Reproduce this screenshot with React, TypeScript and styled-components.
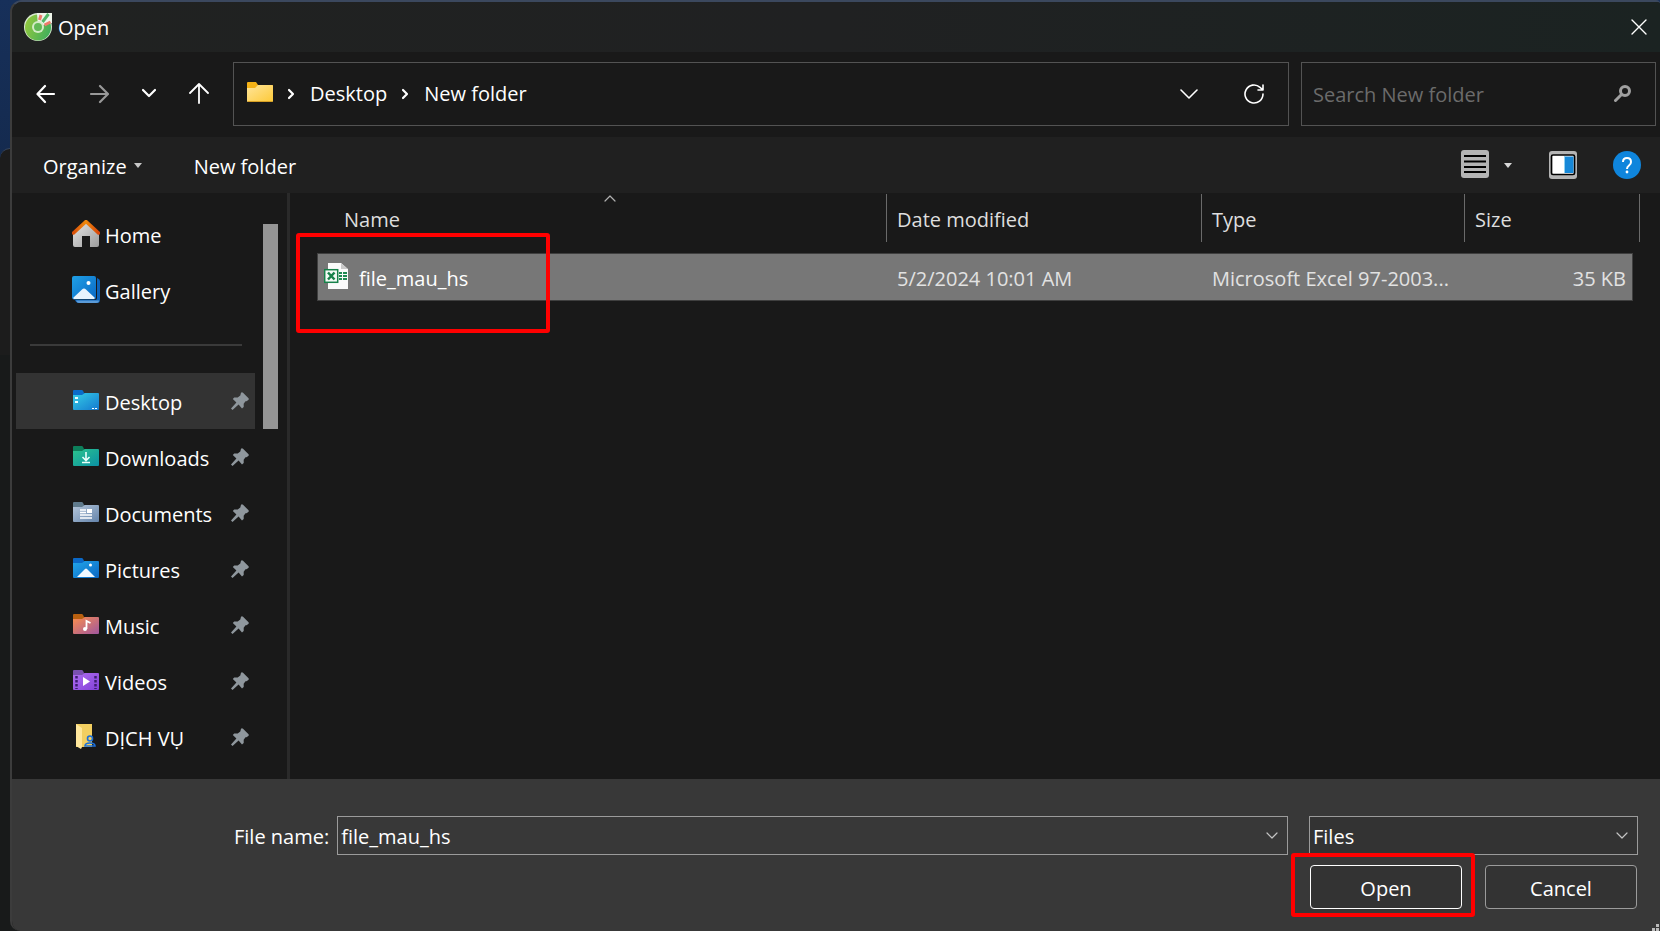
import React from "react";
import styled, { createGlobalStyle, css } from "styled-components";

const GlobalStyle = createGlobalStyle`
  *, *::before, *::after { box-sizing: border-box; }
  body {
    margin: 0;
    background: #1a1c1c;
    color: #fff;
    font-family: "Open Sans", "Noto Sans", sans-serif;
    font-size: 20px;
    line-height: 28px;
  }
  button, input, select { font: inherit; color: inherit; }
  svg { display: block; flex: none; }
`;

const Backdrop = styled.div`
  min-height: 100vh;
  display: grid;
  grid-template-columns: 10px minmax(0, 1fr);
  background: linear-gradient(180deg, #17305a 0, #142a4e 170px, #1a1c1c 170px);
`;

const BehindWindow = styled.div`
  margin-top: 148px;
  border-top: 1px solid #38465c;
  border-top-left-radius: 10px;
  background: linear-gradient(180deg, #1c1c1c 0, #1c1c1c 206px, #181a1a 206px);
`;

const Dialog = styled.main`
  display: flex;
  flex-direction: column;
  min-height: 100vh;
  overflow: hidden;
  border-left: 2px solid #3c3c3c;
  border-top: 2px solid #3b485e;
  border-radius: 12px 4px 0 10px;
  background: #191919;
`;

const TitleBar = styled.header`
  display: flex;
  align-items: center;
  gap: 6px;
  height: 50px;
  padding: 0 13px 0 12px;
  background: linear-gradient(90deg, #202221 0, #202122 50%, #1b2322 100%);
`;

const Title = styled.h1`
  flex: 1;
  margin: 0;
  padding-top: 2px;
  font-size: 20px;
  font-weight: 400;
`;

const IconButton = styled.button`
  display: flex;
  align-items: center;
  justify-content: center;
  padding: 0;
  border: 0;
  background: transparent;
`;

const NavBar = styled.nav`
  display: flex;
  align-items: center;
  gap: 12px;
  height: 85px;
  padding: 0 4px 2px 24px;
`;

const NavButtons = styled.div`
  display: flex;
  gap: 33px;
  margin-right: 12px;
`;

const NavField = css`
  display: flex;
  align-items: center;
  height: 64px;
  border: 1px solid #535353;
`;

const AddressBar = styled.div`
  ${NavField}
  flex: 1;
  min-width: 0;
  padding: 0 24px 0 13px;
`;

const Crumbs = styled.ol`
  display: flex;
  flex: 1;
  align-items: center;
  gap: 14px;
  margin: 0 0 0 14px;
  padding: 0;
  list-style: none;
`;

const Crumb = styled.li`
  display: flex;
  align-items: center;
  gap: 15px;

  a { color: inherit; text-decoration: none; }
`;

const AddressActions = styled.div`
  display: flex;
  gap: 46px;
`;

const SearchBox = styled.label`
  ${NavField}
  width: 355px;
  padding: 0 24px 0 11px;
`;

const SearchInput = styled.input`
  flex: 1;
  min-width: 0;
  padding: 2px 0 0;
  border: 0;
  outline: 0;
  background: transparent;

  &::placeholder { color: #6b6b6b; opacity: 1; }
`;

const CommandBar = styled.div`
  display: flex;
  align-items: center;
  height: 56px;
  padding: 0 19px 0 31px;
  background: #202020;
`;

const CommandGroup = styled.div<{ $push?: boolean; $gap: number }>`
  display: flex;
  align-items: center;
  gap: ${(p) => p.$gap}px;
  margin-left: ${(p) => (p.$push ? "auto" : 0)};
`;

const CommandButton = styled(IconButton)`
  gap: 7px;
`;

const CommandLabel = styled.span`
  padding-top: 3px;
`;

const Body = styled.div`
  display: flex;
  flex: 1;
`;

const Sidebar = styled.aside`
  display: flex;
  flex: none;
  width: 278px;
  padding: 13px 0 14px 4px;
  border-right: 3px solid #2a2a2a;
`;

const PlaceList = styled.ul`
  width: 239px;
  margin: 0;
  padding: 0;
  list-style: none;
`;

const PlaceLink = styled.a<{ $selected?: boolean }>`
  display: flex;
  align-items: center;
  gap: 5px;
  height: 56px;
  padding: 0 6px 0 56px;
  background: ${(p) => (p.$selected ? "#333" : "transparent")};
  color: #fff;
  text-decoration: none;
  white-space: nowrap;
`;

const PlaceName = styled.span`
  flex: 1;
  padding-top: 3px;
`;

const PlaceDivider = styled.li`
  height: 2px;
  margin: 26px 13px 27px 14px;
  background: #3a3a3a;
`;

const ScrollThumb = styled.div`
  width: 15px;
  height: 205px;
  margin: 18px 0 0 8px;
  background: #959595;
`;

const FilePane = styled.section`
  flex: 1;
  min-width: 0;
  padding: 1px 20px 0 27px;
`;

const FileTable = styled.table`
  display: block;
  font-weight: 400;

  thead, tbody { display: block; }
`;

const HeaderRow = styled.tr`
  display: grid;
  grid-template-columns: minmax(0, 1fr) 315px 263px 175px;
  margin-bottom: 11px;
  padding-left: 17px;
`;

const HeaderCell = styled.th`
  position: relative;
  height: 48px;
  padding: 12px 10px 0;
  border-right: 1px solid #6a6a6a;
  color: #dedede;
  font-weight: 400;
  text-align: left;
`;

const SortMark = styled.span`
  position: absolute;
  top: 0;
  left: 50%;
  transform: translateX(-50%);
`;

const FileRow = styled.tr`
  display: grid;
  grid-template-columns: minmax(0, 1fr) 315px 263px 167px;
  align-items: center;
  height: 48px;
  margin-right: 7px;
  border: 1px solid #3f3f3f;
  background: #777;
`;

const FileCell = styled.td<{ $end?: boolean }>`
  padding: 3px ${(p) => (p.$end ? 6 : 14)}px 0 10px;
  overflow: hidden;
  color: #e2e2e2;
  text-align: ${(p) => (p.$end ? "right" : "left")};
  text-overflow: ellipsis;
  white-space: nowrap;
`;

const NameCell = styled.td`
  position: relative;
  display: flex;
  align-items: center;
  gap: 11px;
  padding: 0 0 0 6px;
`;

const FileName = styled.span`
  padding-top: 4px;
`;

const Highlight = styled.span`
  position: absolute;
  border: 4px solid #f00;
  border-radius: 3px;
  pointer-events: none;
`;

const FileHighlight = styled(Highlight)`
  top: -28px;
  left: -22px;
  width: 254px;
  height: 100px;
`;

const ButtonHighlight = styled(Highlight)`
  inset: -12px -13px -8px -19px;
`;

const Footer = styled.form`
  position: relative;
  display: grid;
  grid-template-columns: minmax(0, 1fr) 329px;
  column-gap: 21px;
  row-gap: 10px;
  padding: 37px 22px 22px 222px;
  background: #383838;
`;

const FileNameField = styled.label`
  display: flex;
  align-items: center;
  gap: 8px;
  height: 39px;
  white-space: nowrap;
`;

const FieldLabel = styled.span`
  padding-top: 2px;
`;

const BoxFrame = styled.span`
  position: relative;
  display: flex;
  flex: 1;
  min-width: 0;
  height: 39px;
`;

const fieldStyle = css`
  width: 100%;
  padding: 3px 40px 0 3px;
  border: 1px solid #9b9b9b;
  border-radius: 0;
  outline: 0;
`;

const FileNameInput = styled.input`
  ${fieldStyle}
  background: #383838;
`;

const TypeSelect = styled.select`
  ${fieldStyle}
  appearance: none;
  background: #333;
`;

const FieldChevron = styled.span`
  position: absolute;
  top: 15px;
  right: 10px;
  pointer-events: none;
`;

const Buttons = styled.div`
  display: flex;
  grid-column: 2;
  justify-content: space-between;
  padding: 0 1px;
`;

const ButtonSlot = styled.span`
  position: relative;
  display: flex;
`;

const DialogButton = styled.button<{ $primary?: boolean }>`
  width: 152px;
  height: 44px;
  padding: 3px 0 0;
  border: 1px solid ${(p) => (p.$primary ? "#fff" : "#9b9b9b")};
  border-radius: 4px;
  background: #333;
`;

const Grip = styled.span`
  position: absolute;
  right: 0;
  bottom: 0;
`;

type StrokeProps = { d: string; w: number; h: number; color?: string; width?: number };

const Stroke = ({ d, w, h, color = "#fff", width = 2 }: StrokeProps) => (
  <svg width={w} height={h} viewBox={`0 0 ${w} ${h}`} fill="none" stroke={color} strokeWidth={width} strokeLinecap="round" strokeLinejoin="round" aria-hidden="true">
    <path d={d} />
  </svg>
);

const Caret = () => (
  <svg width="8" height="5" viewBox="0 0 8 5" aria-hidden="true"><path d="M0 0h8L4 5z" fill="#c8c8c8" /></svg>
);

const AppLogo = () => (
  <svg width="28" height="28" viewBox="0 0 28 28" aria-hidden="true">
    <defs>
      <linearGradient id="logo" x1="0" x2="1" y1="0.3" y2="0.7">
        <stop offset="0" stopColor="#93c83e" /><stop offset="1" stopColor="#3fae5c" />
      </linearGradient>
    </defs>
    <circle cx="14" cy="14" r="14" fill="#d9ead0" />
    <path d="M14 0h14v10H14z" fill="#f1f6ee" />
    <circle cx="14" cy="14.500" r="13" fill="url(#logo)" />
    <path d="M14 14L13 0h15v9z" fill="#eef5ea" />
    <path d="M15.500 7l1.500-5" stroke="#ee7b6b" strokeWidth="3" />
    <path d="M18.500 9l6-8" stroke="#52b766" strokeWidth="3" />
    <path d="M20.500 12l6-3" stroke="#ee7b6b" strokeWidth="3" />
    <circle cx="14" cy="14" r="6" fill="#d3ebc6" />
    <circle cx="14" cy="14" r="4" fill="#62b957" />
  </svg>
);

const YellowFolder = () => (
  <svg width="26" height="26" viewBox="0 0 26 26" aria-hidden="true">
    <defs>
      <linearGradient id="yf" x1="0" x2="1" y1="0" y2="1">
        <stop offset="0" stopColor="#ffe59b" /><stop offset="1" stopColor="#fdc937" />
      </linearGradient>
    </defs>
    <path d="M0 2q0-1 1-1h8l2 3h14q1 0 1 1v4H0z" fill="#f5b216" />
    <path d="M0 7h8l3-3h14q1 0 1 1v15q0 1-1 1H1q-1 0-1-1z" fill="url(#yf)" />
    <path d="M1 20.500h24" stroke="#d9a125" />
  </svg>
);

const HomeIcon = () => (
  <svg width="28" height="28" viewBox="0 0 28 28" aria-hidden="true">
    <defs>
      <linearGradient id="wall" x1="0" x2="1" y1="0" y2="1"><stop offset="0" stopColor="#e6e6e6" /><stop offset="1" stopColor="#9c9c9c" /></linearGradient>
      <linearGradient id="roof" x1="0" x2="1"><stop offset="0" stopColor="#d9500a" /><stop offset="0.5" stopColor="#f08a0c" /><stop offset="1" stopColor="#d8460a" /></linearGradient>
    </defs>
    <path d="M1 13L14 2l13 11v12q0 2-2 2h-7V16h-8v11H3q-2 0-2-2z" fill="url(#wall)" />
    <path d="M1.500 13L14 1.500l12.500 11.500" fill="none" stroke="url(#roof)" strokeWidth="3.500" strokeLinecap="round" strokeLinejoin="round" />
  </svg>
);

const GalleryIcon = () => (
  <svg width="28" height="28" viewBox="0 0 28 28" aria-hidden="true">
    <defs>
      <linearGradient id="gal" x1="0" x2="1" y1="0" y2="1"><stop offset="0" stopColor="#1fa0e6" /><stop offset="1" stopColor="#0a68c4" /></linearGradient>
    </defs>
    <path d="M25 2q3 1 3 3v19q0 3-3 3H7q-3 0-4-3h20q2 0 2-2z" fill="#0c62b8" />
    <path d="M4 24.500h23q0 2.500-3 2.500H7q-2 0-3-2.500z" fill="#5b9bd8" />
    <rect width="24" height="23.500" rx="2" fill="url(#gal)" />
    <path d="M1 22l9-8.500q2-2 4 0l9 8.500-1 1H2z" fill="#e8f4fd" />
    <circle cx="16.500" cy="7" r="2" fill="#fff" />
  </svg>
);

type FolderProps = { id: string; tab: string; from: string; to: string; children?: React.ReactNode };

const PlaceFolder = ({ id, tab, from, to, children }: FolderProps) => (
  <svg width="28" height="22" viewBox="-1 0 28 22" aria-hidden="true">
    <defs>
      <linearGradient id={id} x1="0" x2="1" y1="0" y2="1"><stop offset="0" stopColor={from} /><stop offset="1" stopColor={to} /></linearGradient>
    </defs>
    <path d="M0 1q0-1 1-1h8q1 0 2 3h14v3H0z" fill={tab} />
    <path d="M0 5h9l3-2h13q1 0 1 1v15q0 1-1 1H1q-1 0-1-1z" fill={`url(#${id})`} />
    {children}
  </svg>
);

const ServiceFolder = () => (
  <svg width="28" height="28" viewBox="0 0 28 28" aria-hidden="true">
    <path d="M4 1h16v23H4z" fill="#f3cf60" />
    <path d="M4 1l6 4v19l-1 2-5-3z" fill="#ffe79c" />
    <g fill="none" stroke="#1b6fd8" strokeWidth="1.600">
      <circle cx="18" cy="15.500" r="2.500" />
      <path d="M13 23q0-3 5-3t5 3z" />
    </g>
  </svg>
);

const PinIcon = () => (
  <svg width="18" height="18" viewBox="0 0 18 18" fill="#8f979d" aria-hidden="true">
    <path d="M10 0.700q1-1 2 0l5.300 5.300q1 1 0 2l-1.800 1.200-1 0-1.800 2.600v3.200l-1.700 1.500L7.600 12.600 1.500 18 0 16.500l5.400-6.100L1.800 7l1.400-1.600h3.500l2.600-2z" />
  </svg>
);

const ExcelIcon = () => (
  <svg width="24" height="28" viewBox="0 0 24 28" aria-hidden="true">
    <path d="M4 0h14l6 6v20H4z" fill="#fafafa" />
    <path d="M17 0h7v6z" fill="#777" />
    <path d="M17 0v6h7z" fill="#c9c9c9" />
    <path d="M15 10h3M19 10h4M15 13h3M19 13h4M15 16h3M19 16h4" stroke="#1f8a52" strokeWidth="2" />
    <rect x="0.700" y="6.700" width="13" height="12.600" fill="#f4faf6" stroke="#17814a" strokeWidth="1.500" />
    <path d="M4 9.500l6.500 7M10.500 9.500l-6.500 7" stroke="#17814a" strokeWidth="2.500" />
  </svg>
);

const places = [
  { name: "Home", icon: <HomeIcon /> },
  { name: "Gallery", icon: <GalleryIcon /> },
];

const pinned = [
  {
    name: "Desktop", selected: true,
    icon: (
      <PlaceFolder id="desk" tab="#0a6cc9" from="#35cde6" to="#1479cf">
        <path d="M2 7h3v2H2zM2 11h3v2H2z" fill="#eaffff" /><path d="M19 18.500h2M22 18.500h2" stroke="#fff" />
      </PlaceFolder>
    ),
  },
  {
    name: "Downloads",
    icon: (
      <PlaceFolder id="down" tab="#0d7f5b" from="#2cc48c" to="#0b91a5">
        <path d="M13 6v8M9.500 11l3.500 3.500 3.500-3.500M9 16.500h8" fill="none" stroke="#e9fffa" strokeWidth="1.600" />
      </PlaceFolder>
    ),
  },
  {
    name: "Documents",
    icon: (
      <PlaceFolder id="docs" tab="#5f7a8c" from="#b5c6da" to="#6484ab">
        <path d="M7 8h6M7 10.500h6M7 13h12M7 16h12" stroke="#fff" strokeWidth="1.500" /><path d="M14 7h5v4h-5z" fill="#fff" />
      </PlaceFolder>
    ),
  },
  {
    name: "Pictures",
    icon: (
      <PlaceFolder id="pics" tab="#0b68c6" from="#22a7ea" to="#0b66c2">
        <path d="M4 19l8-8q1-1 2 0l8 8z" fill="#f2f9ff" /><circle cx="17.500" cy="7" r="1.500" fill="#fff" />
      </PlaceFolder>
    ),
  },
  {
    name: "Music",
    icon: (
      <PlaceFolder id="music" tab="#b9600f" from="#fb8e4c" to="#a0569f">
        <circle cx="12" cy="15" r="2" fill="#fff" /><path d="M13.500 15V7l4 2" fill="none" stroke="#fff" strokeWidth="1.800" />
      </PlaceFolder>
    ),
  },
  {
    name: "Videos",
    icon: (
      <PlaceFolder id="vids" tab="#7a50b0" from="#b06ef0" to="#8240d8">
        <path d="M10 7l7 4.500-7 4.500z" fill="#fff" />
        <path d="M3.500 6v13M22.500 6v13" stroke="#3c1c70" strokeWidth="2.500" strokeDasharray="2.500 1.500" />
      </PlaceFolder>
    ),
  },
  { name: "DỊCH VỤ", icon: <ServiceFolder /> },
];

const DownChevron = () => <Stroke d="M1 2l5 5 5-5" w={12} h={8} color="#c4c4c4" width={1.2} />;

export default function App() {
  return (
    <>
      <GlobalStyle />
      <Backdrop>
        <BehindWindow />
        <Dialog>
          <TitleBar>
            <AppLogo />
            <Title>Open</Title>
            <IconButton aria-label="Close"><Stroke d="M1 1l14 14M15 1L1 15" w={16} h={16} width={1.4} /></IconButton>
          </TitleBar>

          <NavBar>
            <NavButtons>
              <IconButton aria-label="Back"><Stroke d="M18 10H2M9 2L1.500 10l7.500 8" w={20} h={20} width={2.2} /></IconButton>
              <IconButton aria-label="Forward"><Stroke d="M2 10h16M11 2l8 8-8 8" w={20} h={20} color="#999" width={2.2} /></IconButton>
              <IconButton aria-label="Recent locations"><Stroke d="M1 6l6 6 6-6" w={14} h={20} width={2.2} /></IconButton>
              <IconButton aria-label="Up"><Stroke d="M10 20V1M1 10l9-9 9 9" w={20} h={21} width={1.8} /></IconButton>
            </NavButtons>
            <AddressBar>
              <YellowFolder />
              <Crumbs>
                {["Desktop", "New folder"].map((c) => (
                  <Crumb key={c}>
                    <Stroke d="M2 2l4 4-4 4" w={8} h={12} width={2.2} />
                    <a href="#">{c}</a>
                  </Crumb>
                ))}
              </Crumbs>
              <AddressActions>
                <IconButton aria-label="Previous locations"><Stroke d="M1 1l8 8 8-8" w={18} h={10} width={1.6} /></IconButton>
                <IconButton aria-label="Refresh">
                  <Stroke d="M19 10a9 9 0 1 1-3-6.700L18.500 5.500M19 1v5h-5" w={20} h={20} width={1.6} />
                </IconButton>
              </AddressActions>
            </AddressBar>
            <SearchBox>
              <SearchInput type="text" aria-label="Search New folder" placeholder="Search New folder" />
              <svg width="17" height="17" viewBox="0 0 17 17" fill="none" stroke="#a0a0a0" strokeLinecap="round" aria-hidden="true">
                <circle cx="11" cy="6" r="4.500" strokeWidth="3" /><path d="M7.500 9.500L1.500 15.500" strokeWidth="3" />
              </svg>
            </SearchBox>
          </NavBar>

          <CommandBar>
            <CommandGroup $gap={52}>
              <CommandButton><CommandLabel>Organize</CommandLabel><Caret /></CommandButton>
              <CommandButton><CommandLabel>New folder</CommandLabel></CommandButton>
            </CommandGroup>
            <CommandGroup $push $gap={36}>
              <CommandButton aria-label="Change view">
                <svg width="28" height="30" viewBox="0 0 28 30" aria-hidden="true">
                  <rect width="28" height="28" rx="3" fill="#b4b4b4" />
                  <path d="M3 6h22M3 11.500h22M3 17h22M3 22h22" stroke="#000" strokeWidth="2" />
                </svg>
                <svg width="17" height="5" viewBox="-8 0 17 5" aria-hidden="true"><path d="M0 0h8L4 5z" fill="#d8d8d8" /></svg>
              </CommandButton>
              <CommandButton aria-label="Preview pane">
                <svg width="28" height="28" viewBox="0 0 28 28" aria-hidden="true">
                  <rect width="28" height="28" rx="3" fill="#b4b4b4" />
                  <rect x="2.500" y="4" width="23" height="19.500" rx="1.500" fill="#fff" stroke="#000" strokeWidth="1.700" />
                  <path d="M16 5.500h8.500v16.500H16z" fill="#1688d8" /><path d="M15.500 5v17" stroke="#8fd0f0" />
                </svg>
              </CommandButton>
              <CommandButton aria-label="Help">
                <svg width="28" height="28" viewBox="0 0 28 28" fill="none" aria-hidden="true">
                  <circle cx="14" cy="14" r="14" fill="#0f85dc" />
                  <path d="M10 11q0-4 4-4t4 4q0 2-2 3.500t-2 3.500" stroke="#fff" strokeWidth="2" /><circle cx="14" cy="21" r="1.400" fill="#fff" />
                </svg>
              </CommandButton>
            </CommandGroup>
          </CommandBar>

          <Body>
            <Sidebar>
              <PlaceList>
                {places.map((p) => (
                  <li key={p.name}><PlaceLink href="#">{p.icon}<PlaceName>{p.name}</PlaceName></PlaceLink></li>
                ))}
                <PlaceDivider />
                {pinned.map((p) => (
                  <li key={p.name}>
                    <PlaceLink href="#" $selected={p.selected}>{p.icon}<PlaceName>{p.name}</PlaceName><PinIcon /></PlaceLink>
                  </li>
                ))}
              </PlaceList>
              <ScrollThumb />
            </Sidebar>
            <FilePane>
              <FileTable>
                <thead>
                  <HeaderRow>
                    <HeaderCell>Name<SortMark><Stroke d="M1 7l5-5 5 5" w={12} h={8} color="#b0b0b0" width={1.2} /></SortMark></HeaderCell>
                    <HeaderCell>Date modified</HeaderCell>
                    <HeaderCell>Type</HeaderCell>
                    <HeaderCell>Size</HeaderCell>
                  </HeaderRow>
                </thead>
                <tbody>
                  <FileRow>
                    <NameCell><ExcelIcon /><FileName>file_mau_hs</FileName><FileHighlight /></NameCell>
                    <FileCell>5/2/2024 10:01 AM</FileCell>
                    <FileCell>Microsoft Excel 97-2003...</FileCell>
                    <FileCell $end>35 KB</FileCell>
                  </FileRow>
                </tbody>
              </FileTable>
            </FilePane>
          </Body>

          <Footer onSubmit={(e) => e.preventDefault()}>
            <FileNameField>
              <FieldLabel>File name:</FieldLabel>
              <BoxFrame>
                <FileNameInput type="text" defaultValue="file_mau_hs" />
                <FieldChevron><DownChevron /></FieldChevron>
              </BoxFrame>
            </FileNameField>
            <BoxFrame>
              <TypeSelect aria-label="File type"><option>Files</option></TypeSelect>
              <FieldChevron><DownChevron /></FieldChevron>
            </BoxFrame>
            <Buttons>
              <ButtonSlot><DialogButton $primary type="submit">Open</DialogButton><ButtonHighlight /></ButtonSlot>
              <DialogButton type="button">Cancel</DialogButton>
            </Buttons>
            <Grip>
              <svg width="8" height="8" viewBox="0 0 8 8" aria-hidden="true"><path d="M4 1h3v3H4zM0 5h3v3H0zM4 5h3v3H4z" fill="#bbb" /></svg>
            </Grip>
          </Footer>
        </Dialog>
      </Backdrop>
    </>
  );
}
